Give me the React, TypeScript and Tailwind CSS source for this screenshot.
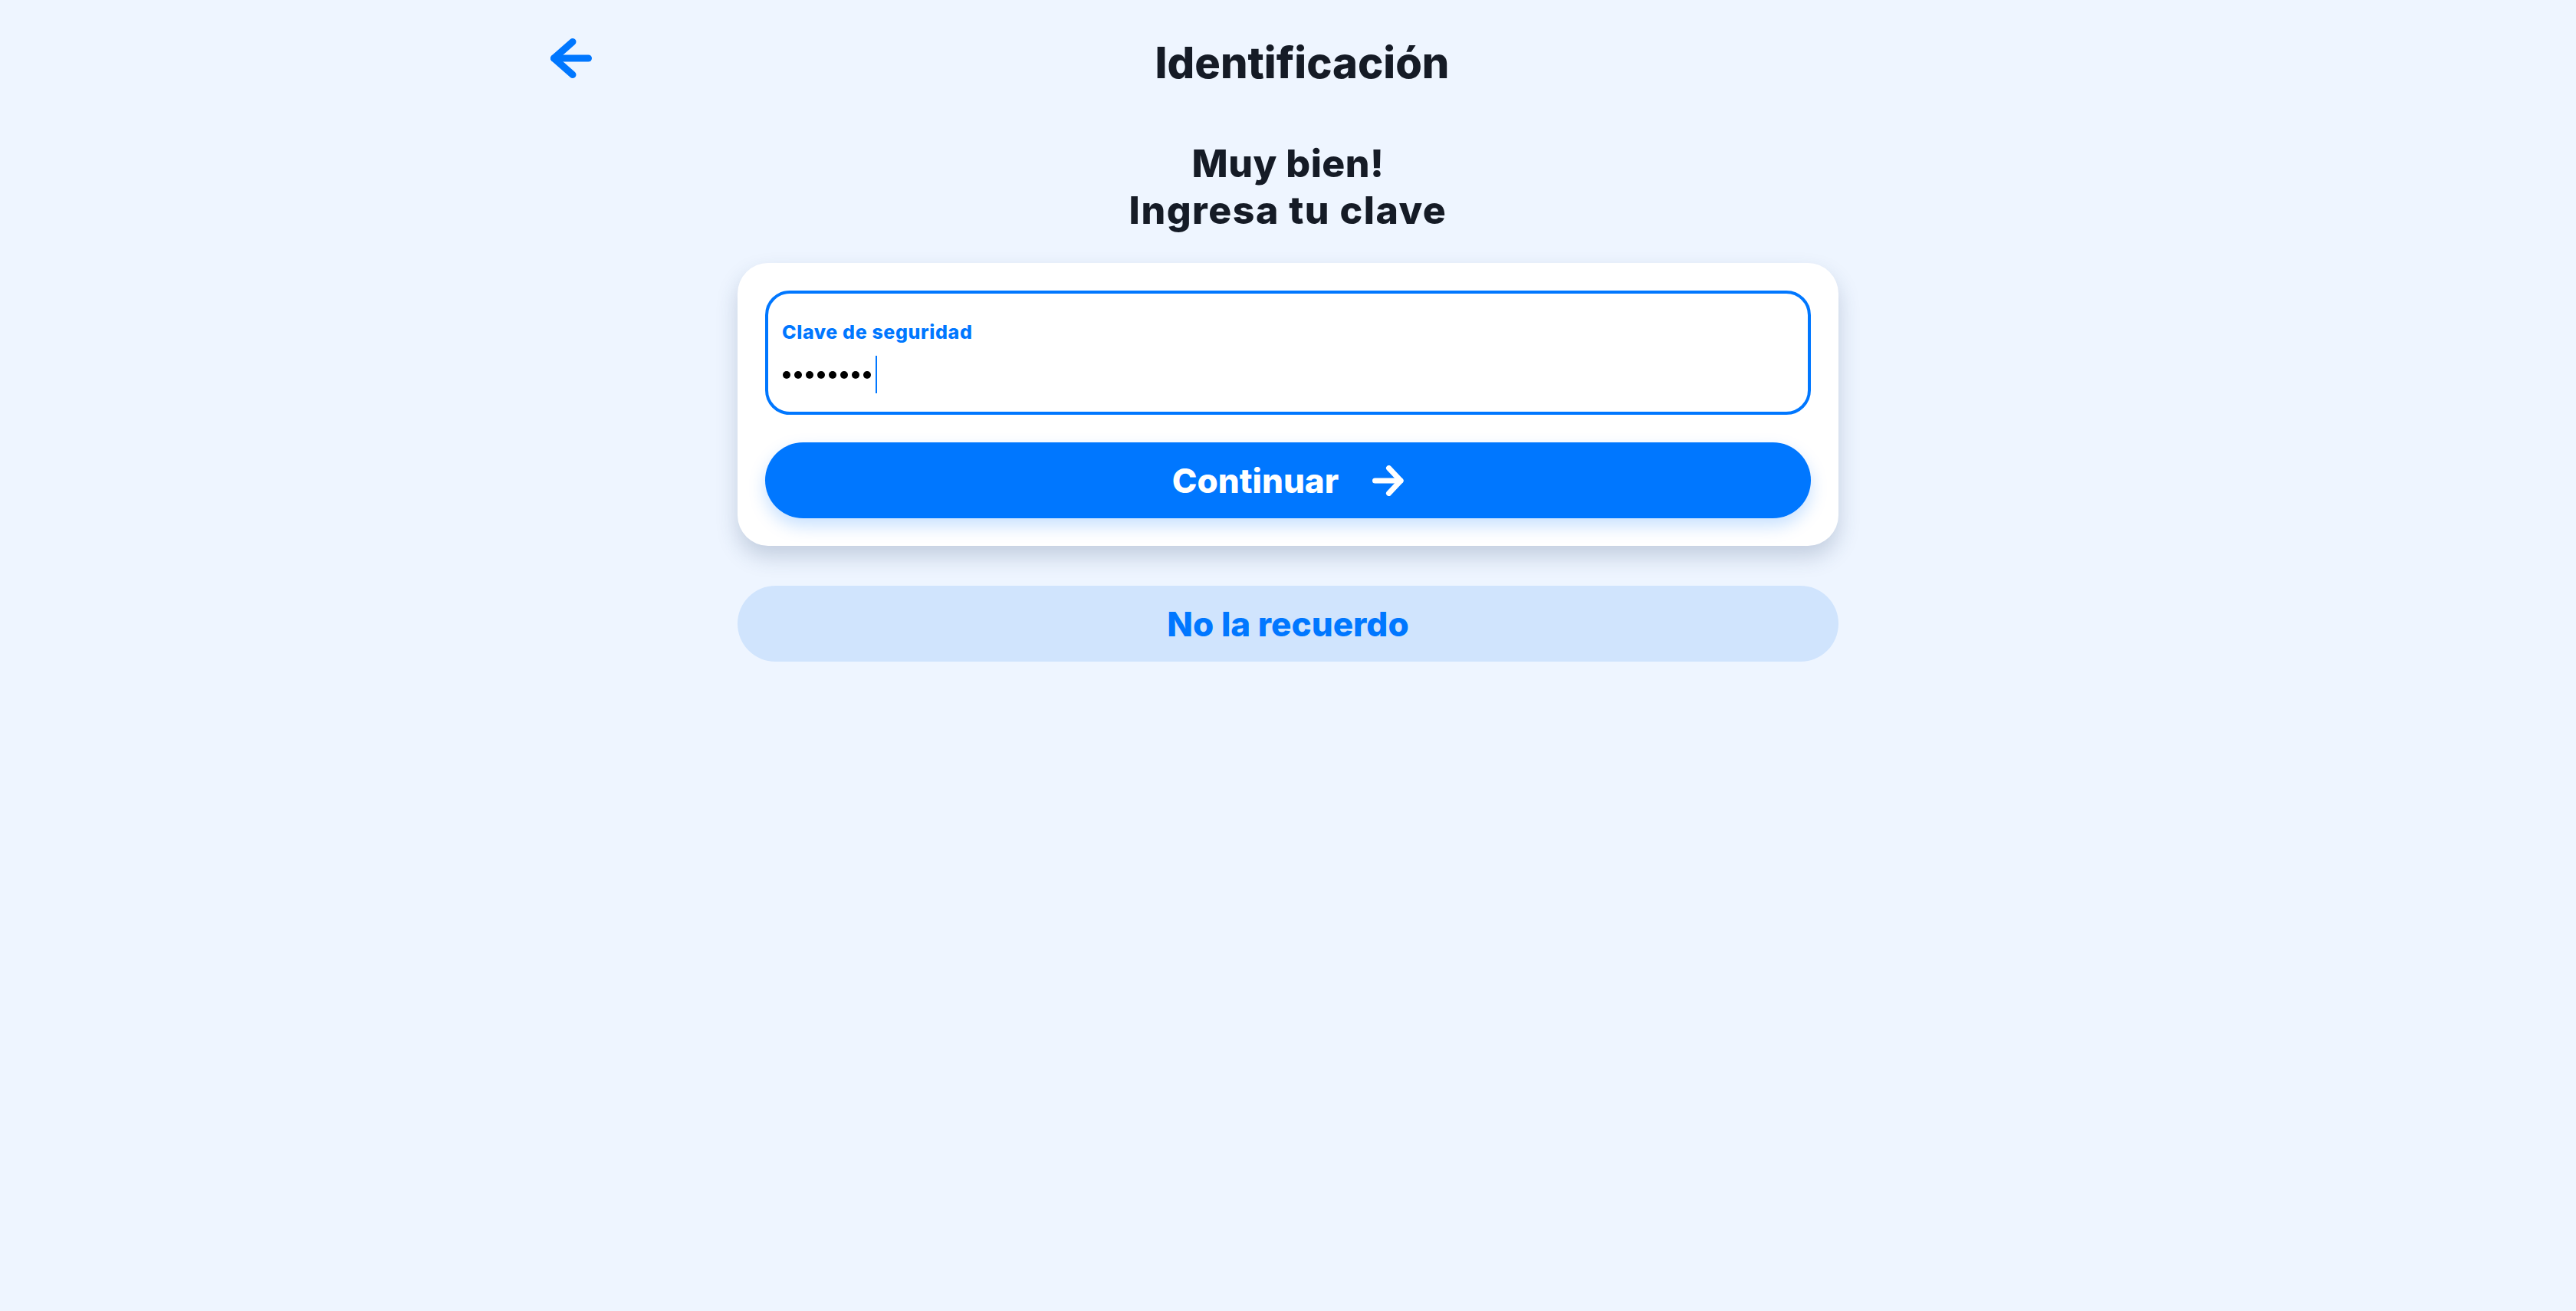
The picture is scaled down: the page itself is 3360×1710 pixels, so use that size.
export default function App() {
  return (
    <div className="min-h-screen bg-[#EEF5FF] font-['Inter',sans-serif] text-[#151B26]">
      <header className="mx-auto flex w-[1924px] items-start pt-[50px]">
        <button className="h-[52px] w-[54px] shrink-0" aria-label="Volver">
          <svg width="54" height="52" viewBox="0 0 54 52" fill="none" stroke="#0077FF" strokeWidth="9" strokeLinecap="round" strokeLinejoin="round">
            <path d="M4.5 26H49.5" />
            <path d="M29 4.5L4.5 26L29 47.5" />
          </svg>
        </button>
        <h1 className="mt-[4px] flex-1 pr-[17px] text-center text-[56px] font-extrabold leading-[56px]">Identificación</h1>
      </header>

      <main className="mx-auto w-[1436px]">
        <h2 className="mt-[73px] text-center text-[50px] font-extrabold leading-[61px]">
          <span className="block tracking-[0.01em]">Muy bien!</span>
          <span className="block tracking-[0.03em]">Ingresa tu clave</span>
        </h2>

        <div className="mt-[38px] rounded-[40px] bg-white p-[36px] shadow-[0_14px_28px_rgba(40,70,110,0.22)]">
          <div className="h-[162px] rounded-[32px] border-4 border-[#0077FF] pl-[18px] pt-[38px]">
            <label className="block text-[25px] font-extrabold leading-[25px] tracking-[0.025em] text-[#0077FF]">Clave de seguridad</label>
            <div className="mt-[18px] flex h-[49px] items-center gap-[5px] pl-[1px]">
              {Array.from({ length: 8 }).map((_, i) => (
                <span key={i} className="h-[10px] w-[10px] rounded-full bg-black" />
              ))}
              <span className="ml-[1px] h-[49px] w-[2px] bg-[#0077FF]" />
            </div>
          </div>

          <button className="mt-[36px] flex h-[99px] w-full items-center justify-center gap-[44px] rounded-full bg-[#0077FF] text-[44px] font-extrabold text-white shadow-[0_10px_22px_rgba(0,119,255,0.22)]">
            <span>Continuar</span>
            <svg width="41" height="40" viewBox="0 0 41 40" fill="none" stroke="white" strokeWidth="7" strokeLinecap="round" strokeLinejoin="round">
              <path d="M3.5 20H37" />
              <path d="M21.5 3.5L37 20L21.5 36.5" />
            </svg>
          </button>
        </div>

        <button className="mt-[52px] flex h-[99px] w-full items-center justify-center rounded-full bg-[#D0E4FD] text-[44px] font-extrabold text-[#0077FF]">
          No la recuerdo
        </button>
      </main>
    </div>
  );
}
